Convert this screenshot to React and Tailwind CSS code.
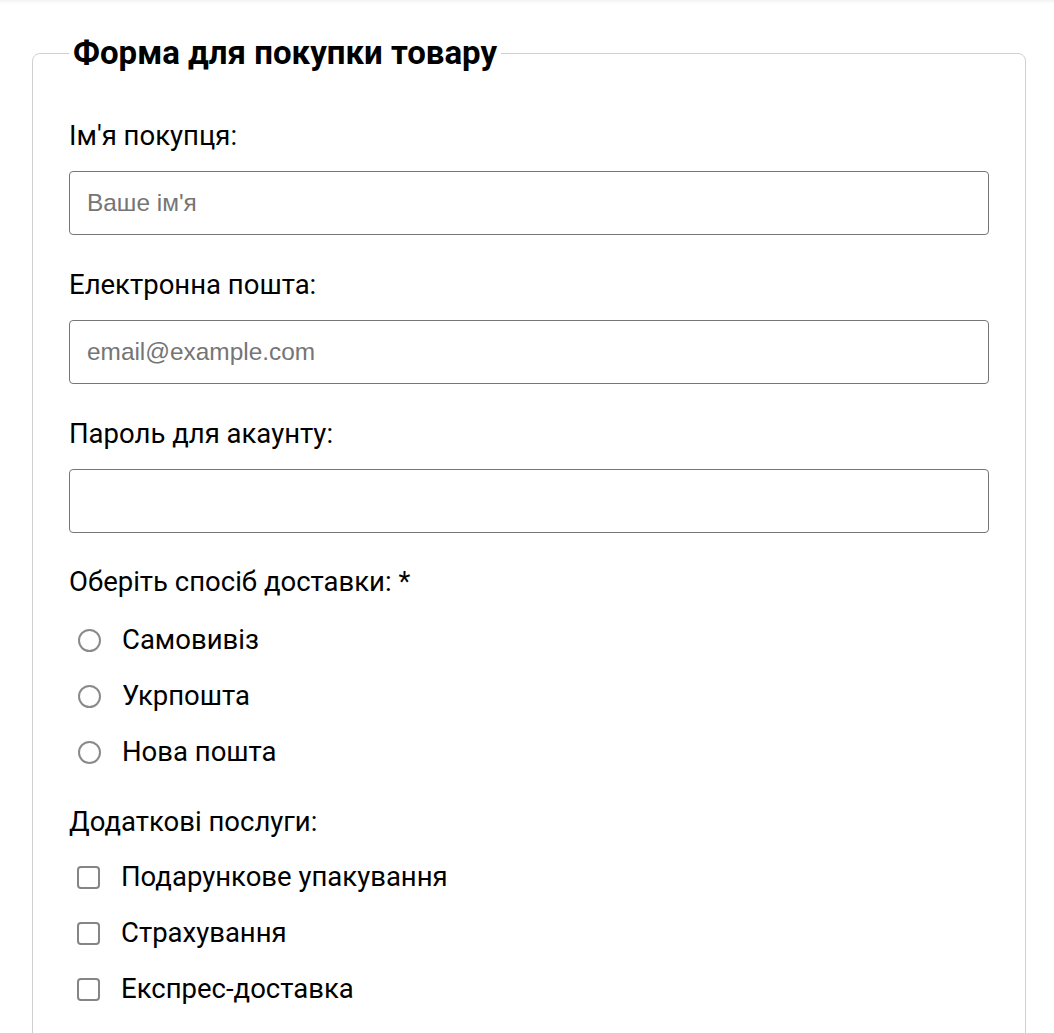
const deliveryOptions = ['Самовивіз', 'Укрпошта', 'Нова пошта'];
const extraServices = ['Подарункове упакування', 'Страхування', 'Експрес-доставка'];

function TextField({ label, type = 'text', placeholder, first }) {
  return (
    <div className={first ? '' : 'mt-[36px]'}>
      <label className="block text-[27.5px] leading-[28px] text-black">{label}</label>
      <input
        type={type}
        placeholder={placeholder}
        className="mt-[21px] block w-full h-16 px-[17px] border border-[#767676] rounded-[4px] bg-white font-['Liberation_Sans',Arial,sans-serif] text-[24.4px] text-black placeholder:text-[#757575] outline-none"
      />
    </div>
  );
}

export default function App() {
  return (
    <div className="min-h-screen bg-white font-['Roboto',sans-serif] text-black">
      {/* faint top shade */}
      <div className="h-[4px] bg-gradient-to-b from-[#f3f3f3] to-white" />

      <div className="pl-8 pr-7 pt-[34px] pb-10">
        <fieldset className="border border-[#d0d0d0] rounded-lg px-9 pb-10">
          <legend className="px-1 text-[33px] leading-[30px] font-bold">Форма для покупки товару</legend>

          <div className="pt-[54px]">
            <TextField first label="Ім'я покупця:" placeholder="Ваше ім'я" />
            <TextField label="Електронна пошта:" type="email" placeholder="email@example.com" />
            <TextField label="Пароль для акаунту:" type="password" />

            {/* delivery */}
            <div className="mt-[35px]">
              <p className="text-[27.5px] leading-[28px]">Оберіть спосіб доставки: *</p>
              <div className="mt-4 flex flex-col">
                {deliveryOptions.map((opt) => (
                  <label key={opt} className="h-14 flex items-center cursor-pointer">
                    <input
                      type="radio"
                      name="delivery"
                      className="appearance-none ml-[9px] w-[23px] h-[23px] rounded-full border-2 border-[#8a8a8a] bg-white shrink-0"
                    />
                    <span className="ml-[21px] text-[27.5px] leading-[30px]">{opt}</span>
                  </label>
                ))}
              </div>
            </div>

            {/* extras */}
            <div className="mt-[28px]">
              <p className="text-[27.5px] leading-[28px]">Додаткові послуги:</p>
              <div className="mt-[13px] flex flex-col">
                {extraServices.map((opt) => (
                  <label key={opt} className="h-14 flex items-center cursor-pointer">
                    <input
                      type="checkbox"
                      className="appearance-none ml-2 w-[23px] h-[23px] rounded-[4px] border-2 border-[#858585] bg-white shrink-0"
                    />
                    <span className="ml-[21px] text-[27.5px] leading-[30px]">{opt}</span>
                  </label>
                ))}
              </div>
            </div>
          </div>
        </fieldset>
      </div>
    </div>
  );
}
